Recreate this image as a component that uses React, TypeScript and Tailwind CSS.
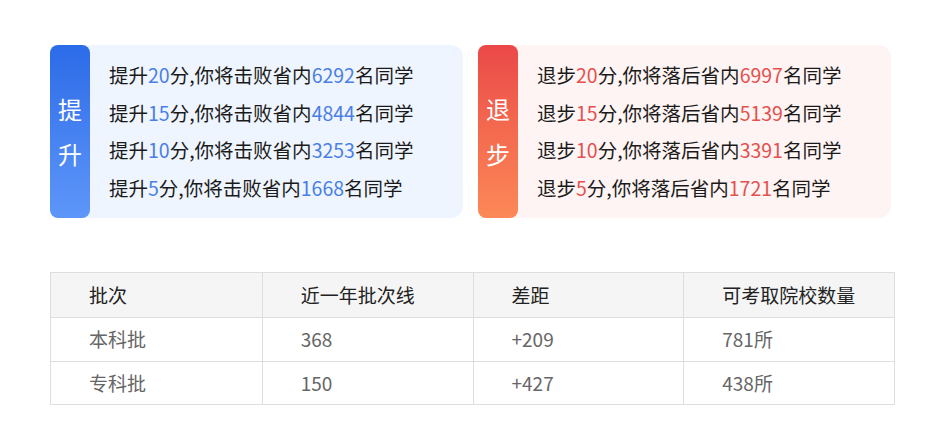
import React from "react"

type Line = { score: number; count: number }

const up: Line[] = [
  { score: 20, count: 6292 },
  { score: 15, count: 4844 },
  { score: 10, count: 3253 },
  { score: 5, count: 1668 },
]

const down: Line[] = [
  { score: 20, count: 6997 },
  { score: 15, count: 5139 },
  { score: 10, count: 3391 },
  { score: 5, count: 1721 },
]

const rows = [
  ["本科批", "368", "+209", "781所"],
  ["专科批", "150", "+427", "438所"],
]

const font = { fontFamily: '"Noto Sans CJK SC", "Noto Sans", sans-serif' }

function Card({ kind, lines }: { kind: "up" | "down"; lines: Line[] }) {
  const isUp = kind === "up"
  return (
    <div className={"flex w-[413px] h-[173px] rounded-[12px] " + (isUp ? "bg-[#eff5fe]" : "bg-[#fef4f3]")}>
      <div
        className={
          "w-[40px] shrink-0 rounded-[8px] flex flex-col items-center justify-center gap-[13px] text-white text-[24px] leading-[32px] " +
          (isUp ? "bg-gradient-to-b from-[#2c6be8] to-[#5e96f9]" : "bg-gradient-to-b from-[#ea4848] to-[#fc8857]")
        }
      >
        <span>{isUp ? "提" : "退"}</span>
        <span>{isUp ? "升" : "步"}</span>
      </div>
      <div className="flex flex-col justify-center pl-[19px] gap-[9.5px] text-[19.5px] leading-[28px] text-[#1a1a1a]">
        {lines.map((l) => (
          <div key={l.score} className="whitespace-nowrap">
            {isUp ? "提升" : "退步"}
            <span className={isUp ? "text-[#4a7fe6]" : "text-[#e4514f]"}>{l.score}</span>
            分,你将{isUp ? "击败" : "落后"}省内
            <span className={isUp ? "text-[#4a7fe6]" : "text-[#e4514f]"}>{l.count}</span>
            名同学
          </div>
        ))}
      </div>
    </div>
  )
}

export default function App() {
  return (
    <div className="w-[951px] h-[442px] bg-white" style={font}>
      <div className="pt-[45px] pl-[50px] flex gap-[15px]">
        <Card kind="up" lines={up} />
        <Card kind="down" lines={down} />
      </div>

      <div className="mt-[54px] ml-[50px] w-[845px] border border-[#dedede]">
        <div className="grid grid-cols-4 h-[44px] bg-[#f5f5f5] text-[#222] text-[19px]">
          {["批次", "近一年批次线", "差距", "可考取院校数量"].map((h, i) => (
            <div key={h} className={"flex items-center pl-[38px] " + (i > 0 ? "border-l border-[#dedede]" : "")}>
              {h}
            </div>
          ))}
        </div>
        {rows.map((r) => (
          <div key={r[0]} className="grid grid-cols-4 h-[43.5px] border-t border-[#dedede] text-[#666] text-[19px]">
            {r.map((c, i) => (
              <div key={i} className={"flex items-center pl-[38px] " + (i > 0 ? "border-l border-[#dedede]" : "")}>
                {c}
              </div>
            ))}
          </div>
        ))}
      </div>
    </div>
  )
}
